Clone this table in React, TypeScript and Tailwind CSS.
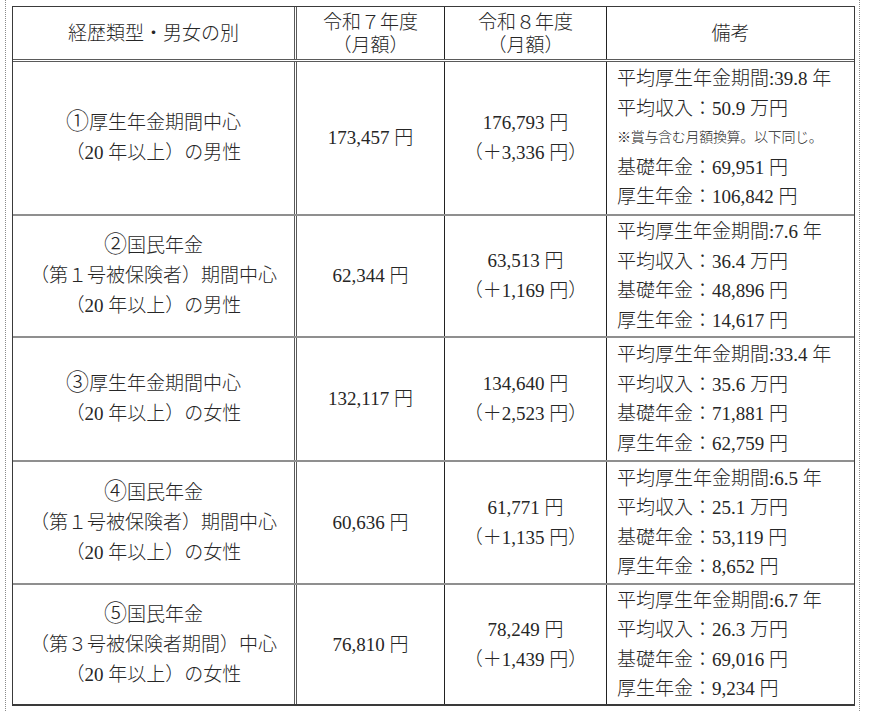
const rows = [
  {
    h: "h-[154px]",
    num: "①",
    type: ["厚生年金期間中心", "（20 年以上）の男性"],
    r7: "173,457 円",
    r8: "176,793 円",
    diff: "（＋3,336 円）",
    period: "39.8 年",
    income: "50.9 万円",
    note: true,
    kiso: "69,951 円",
    kosei: "106,842 円",
  },
  {
    h: "h-[122px]",
    num: "②",
    type: ["国民年金", "（第１号被保険者）期間中心", "（20 年以上）の男性"],
    r7: "62,344 円",
    r8: "63,513 円",
    diff: "（＋1,169 円）",
    period: "7.6 年",
    income: "36.4 万円",
    note: false,
    kiso: "48,896 円",
    kosei: "14,617 円",
  },
  {
    h: "h-[124px]",
    num: "③",
    type: ["厚生年金期間中心", "（20 年以上）の女性"],
    r7: "132,117 円",
    r8: "134,640 円",
    diff: "（＋2,523 円）",
    period: "33.4 年",
    income: "35.6 万円",
    note: false,
    kiso: "71,881 円",
    kosei: "62,759 円",
  },
  {
    h: "h-[123px]",
    num: "④",
    type: ["国民年金", "（第１号被保険者）期間中心", "（20 年以上）の女性"],
    r7: "60,636 円",
    r8: "61,771 円",
    diff: "（＋1,135 円）",
    period: "6.5 年",
    income: "25.1 万円",
    note: false,
    kiso: "53,119 円",
    kosei: "8,652 円",
  },
  {
    h: "h-[119px]",
    num: "⑤",
    type: ["国民年金", "（第３号被保険者期間）中心", "（20 年以上）の女性"],
    r7: "76,810 円",
    r8: "78,249 円",
    diff: "（＋1,439 円）",
    period: "6.7 年",
    income: "26.3 万円",
    note: false,
    kiso: "69,016 円",
    kosei: "9,234 円",
  },
];

const grid = "grid grid-cols-[284px_148px_162px_247px]";
const center = "flex flex-col items-center justify-center text-center";

export default function App() {
  return (
    <div className="min-h-[711px] bg-white">
      <div
        className="ml-[5px] w-[855px] h-[711px] border-x border-dotted border-[#8a8a8a] pl-[6px] pr-[3px] pt-[6px] text-[19px] font-light text-[#262626]"
        style={{ fontFamily: '"Liberation Serif", "Noto Sans CJK JP", serif' }}
      >
        <div className="w-[843px] border-x border-t border-b-2 border-[#3a3a3a]">
          {/* 見出し */}
          <div className={`${grid} h-[55px] border-b-[3px] border-double border-[#5a5a5a]`}>
            <div className={`${center} border-r-[3px] border-double border-[#5a5a5a] leading-[23px]`}>
              経歴類型・男女の別
            </div>
            <div className={`${center} border-r border-[#222] pt-[2px] leading-[23px]`}>
              <span>令和７年度</span>
              <span>（月額）</span>
            </div>
            <div className={`${center} border-r border-[#222] pt-[2px] leading-[23px]`}>
              <span>令和８年度</span>
              <span>（月額）</span>
            </div>
            <div className={`${center} leading-[23px]`}>備考</div>
          </div>

          {rows.map((r, i) => (
            <div
              key={i}
              className={`${grid} ${r.h} ${i < rows.length - 1 ? "border-b-2 border-[#8f8f8f]" : ""}`}
            >
              <div className={`${center} border-r-[3px] border-double border-r-[#5a5a5a] leading-[30px]`}>
                {r.type.map((t, j) => (
                  <span key={t}>
                    {j === 0 && (
                      <span
                        className="text-[23px] leading-none"
                        style={{ fontFamily: '"Noto Sans CJK JP", sans-serif' }}
                      >
                        {r.num}
                      </span>
                    )}
                    {t}
                  </span>
                ))}
              </div>
              <div className={`${center} border-r border-[#222] leading-[30px]`}>{r.r7}</div>
              <div className={`${center} border-r border-[#222] leading-[30px]`}>
                <span>{r.r8}</span>
                <span>{r.diff}</span>
              </div>
              <div className="flex flex-col justify-center pl-[10px] leading-[29.5px] whitespace-nowrap">
                <span>平均厚生年金期間:{r.period}</span>
                <span>平均収入：{r.income}</span>
                {r.note && <span className="text-[14px] tracking-[-0.3px]">※賞与含む月額換算。以下同じ。</span>}
                <span>基礎年金：{r.kiso}</span>
                <span>厚生年金：{r.kosei}</span>
              </div>
            </div>
          ))}
        </div>
      </div>
    </div>
  );
}
